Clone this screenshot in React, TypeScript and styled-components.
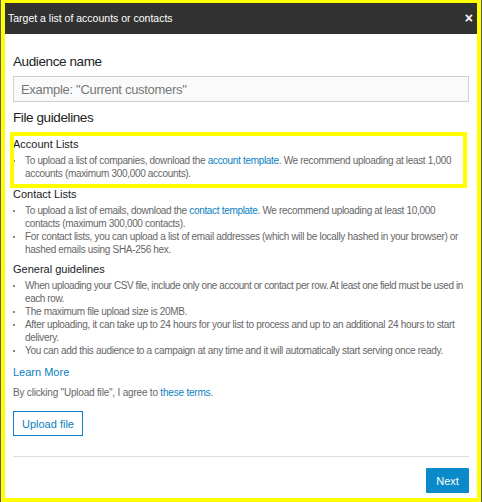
import React from "react";
import styled, { createGlobalStyle } from "styled-components";

const Global = createGlobalStyle`
  html, body { margin: 0; padding: 0; background: #5e5e5e; }
  body { font-family: "Liberation Sans", Arial, sans-serif; }
  * { box-sizing: border-box; }
`;

const Frame = styled.div`
  margin-left: 1px;
  width: 480px;
  height: 502px;
  border: 4px solid #ffff00;
  border-top-width: 3px;
  background: #fff;
  display: flex;
  flex-direction: column;
`;

const Header = styled.div`
  height: 31px;
  background: #323232;
  display: flex;
  align-items: center;
  justify-content: space-between;
  padding: 0 4px 2px 3px;
  color: #fff;
`;

const Title = styled.div`
  font-size: 10.5px;
`;

const Close = styled.span`
  font-size: 14px;
  font-weight: 700;
  line-height: 1;
`;

const Body = styled.div`
  flex: 1;
  padding: 18px 8px 5px 8px;
  display: flex;
  flex-direction: column;
`;

const Heading = styled.div<{ $mt?: number }>`
  font-size: 13.5px;
  line-height: 20px;
  color: #222;
  letter-spacing: -0.4px;
  margin-top: ${(p) => p.$mt ?? 0}px;
`;

const Input = styled.input`
  margin-top: 4px;
  height: 26px;
  width: 456px;
  border: 1px solid #cfcfcf;
  background: #fafafa;
  padding: 0 7px;
  font-family: inherit;
  font-size: 13px;
  letter-spacing: -0.3px;
  color: #333;
  outline: none;
  &::placeholder { color: #777; }
`;

const Section = styled.div<{ $mt: number; $marked?: boolean }>`
  position: relative;
  margin-top: ${(p) => p.$mt}px;
  ${(p) =>
    p.$marked
      ? `&::after {
    content: "";
    position: absolute;
    left: -3px;
    right: 2px;
    top: -5px;
    bottom: -8px;
    border: 4px solid #ffff00;
    pointer-events: none;
  }`
      : ""}
`;

const SubHeading = styled.div`
  font-size: 11px;
  line-height: 14px;
  color: #1a1a1a;
  margin-bottom: 3px;
`;

const List = styled.ul`
  list-style: none;
  margin: 0;
  padding: 0 0 0 12px;
`;

const Item = styled.li<{ $tight?: boolean }>`
  position: relative;
  font-size: 10px;
  line-height: 13px;
  color: #666;
  letter-spacing: ${(p) => (p.$tight ? "-0.42px" : "-0.32px")};
  &::before {
    content: "";
    position: absolute;
    left: -12px;
    top: 6px;
    width: 2px;
    height: 2px;
    background: #888;
  }
`;

const Link = styled.a`
  color: #0b7fc1;
  text-decoration: none;
`;

const LearnMore = styled.a`
  margin-top: 8px;
  font-size: 11px;
  line-height: 14px;
  color: #0b7fc1;
  text-decoration: none;
  align-self: flex-start;
`;

const Terms = styled.div`
  margin-top: 7px;
  font-size: 10px;
  line-height: 14px;
  color: #666;
  letter-spacing: -0.2px;
`;

const OutlineButton = styled.button`
  margin-top: 11px;
  align-self: flex-start;
  width: 70px;
  height: 25px;
  border: 1px solid #0b80c2;
  background: #fff;
  color: #0b80c2;
  font-family: inherit;
  font-size: 11px;
  padding: 0;
`;

const Divider = styled.div`
  margin-top: 20px;
  height: 1px;
  background: #dedede;
`;

const Footer = styled.div`
  margin-top: 11px;
  display: flex;
  justify-content: flex-end;
`;

const PrimaryButton = styled.button`
  width: 43px;
  height: 25px;
  border: none;
  border-radius: 1px;
  background: #0a8ac9;
  color: #fff;
  font-family: inherit;
  font-size: 11px;
  padding: 0;
`;

export default function App() {
  return (
    <>
      <Global />
      <Frame>
        <Header>
          <Title>Target a list of accounts or contacts</Title>
          <Close>×</Close>
        </Header>
        <Body>
          <Heading>Audience name</Heading>
          <Input placeholder={'Example: "Current customers"'} />
          <Heading $mt={6}>File guidelines</Heading>
          <Section $mt={9} $marked>
            <SubHeading>Account Lists</SubHeading>
            <List>
              <Item>
                To upload a list of companies, download the <Link href="#">account template</Link>. We recommend uploading at least 1,000 accounts (maximum 300,000 accounts).
              </Item>
            </List>
          </Section>
          <Section $mt={7}>
            <SubHeading>Contact Lists</SubHeading>
            <List>
              <Item>
                To upload a list of emails, download the <Link href="#">contact template</Link>. We recommend uploading at least 10,000 contacts (maximum 300,000 contacts).
              </Item>
              <Item>
                For contact lists, you can upload a list of email addresses (which will be locally hashed in your browser) or hashed emails using SHA-256 hex.
              </Item>
            </List>
          </Section>
          <Section $mt={6}>
            <SubHeading>General guidelines</SubHeading>
            <List>
              <Item $tight>
                When uploading your CSV file, include only one account or contact per row. At least one field must be used in each row.
              </Item>
              <Item>The maximum file upload size is 20MB.</Item>
              <Item>
                After uploading, it can take up to 24 hours for your list to process and up to an additional 24 hours to start delivery.
              </Item>
              <Item>
                You can add this audience to a campaign at any time and it will automatically start serving once ready.
              </Item>
            </List>
          </Section>
          <LearnMore href="#">Learn More</LearnMore>
          <Terms>
            By clicking "Upload file", I agree to <Link href="#">these terms</Link>.
          </Terms>
          <OutlineButton>Upload file</OutlineButton>
          <Divider />
          <Footer>
            <PrimaryButton>Next</PrimaryButton>
          </Footer>
        </Body>
      </Frame>
    </>
  );
}
